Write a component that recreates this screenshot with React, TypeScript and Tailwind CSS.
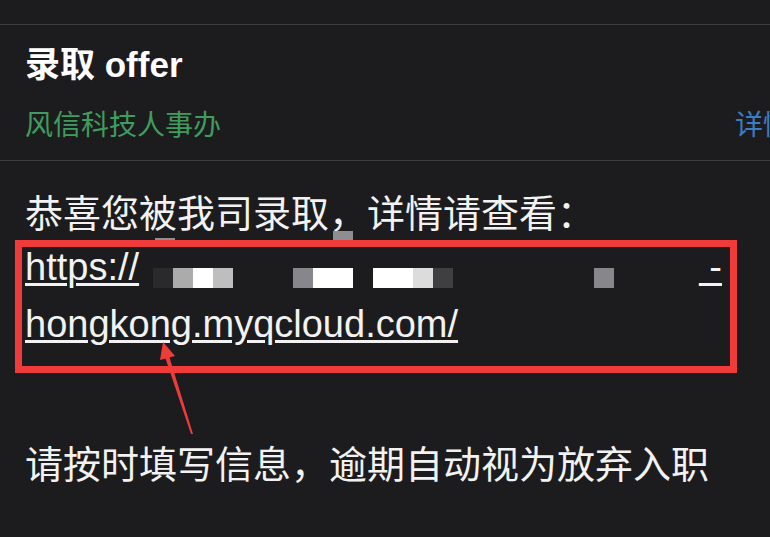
const mosaic = [
  { x: 153, y: 268, w: 20, h: 20, c: "#2a2a2d" },
  { x: 173, y: 268, w: 20, h: 20, c: "#ababab" },
  { x: 193, y: 268, w: 20, h: 20, c: "#ffffff" },
  { x: 213, y: 268, w: 20, h: 20, c: "#bebebe" },
  { x: 293, y: 268, w: 20, h: 20, c: "#87878b" },
  { x: 313, y: 268, w: 40, h: 20, c: "#ffffff" },
  { x: 373, y: 268, w: 40, h: 20, c: "#ffffff" },
  { x: 413, y: 268, w: 20, h: 20, c: "#dcdcdc" },
  { x: 433, y: 268, w: 20, h: 20, c: "#3f3f42" },
  { x: 594, y: 268, w: 20, h: 20, c: "#87878b" },
  { x: 333, y: 231, w: 20, h: 16, c: "#8e8e92" },
  { x: 155, y: 238, w: 20, h: 9, c: "#8f8f92" },
];

export default function App() {
  return (
    <div className="relative w-[770px] h-[537px] overflow-hidden bg-[#1c1c1e] text-[#f2f2f2] font-['Noto_Sans_CJK_SC',sans-serif]">
      {/* previous message edge */}
      <div className="h-[25px] border-b border-[#3d3d40]" />

      {/* header */}
      <div className="h-[136px] border-b border-[#3d3d40] px-[25px] pt-[19px]">
        <div className="text-[35px] leading-[42px] font-bold text-white font-['Liberation_Sans','Noto_Sans_CJK_SC',sans-serif]">
          录取 offer
        </div>
        <div className="mt-[19px] flex text-[28px] leading-[36px]">
          <span className="text-[#3f9c5d]">风信科技人事办</span>
          <span className="ml-auto shrink-0 -mr-[46px] text-[#3b7cc4]">详情</span>
        </div>
      </div>

      {/* body */}
      <div className="px-[25px] pt-[21px]">
        <div className="text-[38px] leading-[57px]">恭喜您被我司录取，详情请查看：</div>
        <div className="flex text-[38px] leading-[57px] font-['Liberation_Sans',sans-serif] underline decoration-[3px] underline-offset-[3px]">
          <span>https://</span>
          <span className="ml-auto mr-[23px]">&nbsp;-</span>
        </div>
        <div className="text-[38px] leading-[57px] font-['Liberation_Sans',sans-serif] underline decoration-[3px] underline-offset-[3px]">
          hongkong.myqcloud.com/
        </div>
        <div className="mt-[80px] text-[38px] leading-[57px]">请按时填写信息，逾期自动视为放弃入职</div>
      </div>

      {/* mosaic over redacted link */}
      {mosaic.map((m, i) => (
        <div
          key={i}
          className="absolute"
          style={{ left: m.x, top: m.y, width: m.w, height: m.h, background: m.c }}
        />
      ))}

      {/* annotation box */}
      <div className="absolute left-[15px] top-[240px] w-[722px] h-[133px] border-[7px] border-[#f03b3b]" />

      {/* annotation arrow */}
      <svg className="absolute left-0 top-0" width="770" height="537" viewBox="0 0 770 537">
        <path d="M163 342 L175 356 L169.5 357.5 L193 434 L191 434 L165.5 358.5 L160 360 Z" fill="#f03b3b" />
      </svg>
    </div>
  );
}
